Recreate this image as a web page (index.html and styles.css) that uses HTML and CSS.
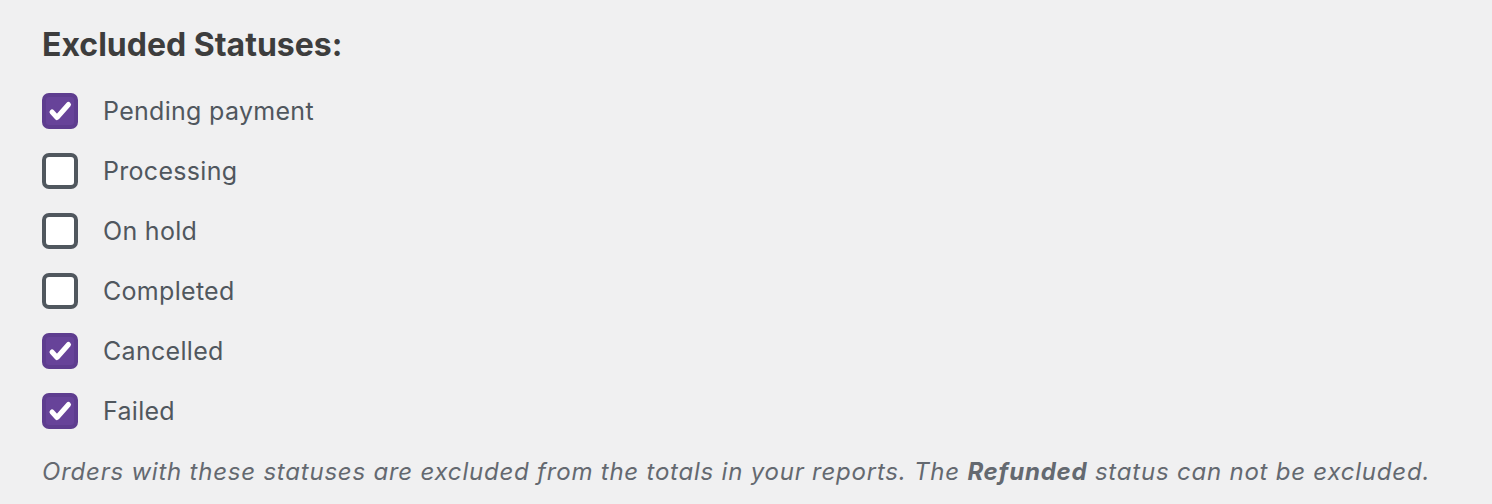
FILE: index.html
```html
<!DOCTYPE html>
<html>
<head>
<meta charset="utf-8">
<link rel="stylesheet" href="styles.css">
</head>
<body>
<div class="panel">
  <h2 class="title">Excluded Statuses:</h2>
  <ul class="list">
    <li class="item"><span class="box checked"><svg viewBox="0 0 36 36"><path d="M10 19 L15 24.5 L26.5 11.5" fill="none" stroke="#fff" stroke-width="5" stroke-linecap="round" stroke-linejoin="round"/></svg></span><span class="label">Pending payment</span></li>
    <li class="item"><span class="box"></span><span class="label">Processing</span></li>
    <li class="item"><span class="box"></span><span class="label">On hold</span></li>
    <li class="item"><span class="box"></span><span class="label">Completed</span></li>
    <li class="item"><span class="box checked"><svg viewBox="0 0 36 36"><path d="M10 19 L15 24.5 L26.5 11.5" fill="none" stroke="#fff" stroke-width="5" stroke-linecap="round" stroke-linejoin="round"/></svg></span><span class="label">Cancelled</span></li>
    <li class="item"><span class="box checked"><svg viewBox="0 0 36 36"><path d="M10 19 L15 24.5 L26.5 11.5" fill="none" stroke="#fff" stroke-width="5" stroke-linecap="round" stroke-linejoin="round"/></svg></span><span class="label">Failed</span></li>
  </ul>
  <p class="note">Orders with these statuses are excluded from the totals in your reports. The <strong>Refunded</strong> status can not be excluded.</p>
</div>
</body>
</html>
```

FILE: styles.css
```css
html, body {
  margin: 0;
  padding: 0;
  background: #f0f0f1;
}
body {
  font-family: Inter, "Noto Sans", sans-serif;
}
.panel {
  padding: 26px 42px 0;
}
.title {
  margin: 0;
  font-size: 32px;
  font-weight: 700;
  color: #3d3d3d;
  line-height: 38px;
}
.list {
  list-style: none;
  margin: 0;
  padding: 0;
  margin-top: 17px;
}
.item {
  display: flex;
  align-items: center;
  height: 60px;
}
.box {
  box-sizing: border-box;
  width: 36px;
  height: 36px;
  border: 4px solid #50575e;
  border-radius: 7px;
  background: #fff;
  flex: none;
  display: flex;
  align-items: center;
  justify-content: center;
}
.box.checked {
  background: #674399;
  border-color: #5e3d8f;
}
.box svg {
  width: 36px;
  height: 36px;
  flex: none;
}
.label {
  margin-left: 25px;
  font-size: 25px;
  letter-spacing: 0.3px;
  color: #50575e;
}
.note {
  margin: 16px 0 0;
  font-size: 24px;
  letter-spacing: 0.78px;
  font-style: italic;
  color: #646970;
}
.note strong {
  font-weight: 700;
}
```
